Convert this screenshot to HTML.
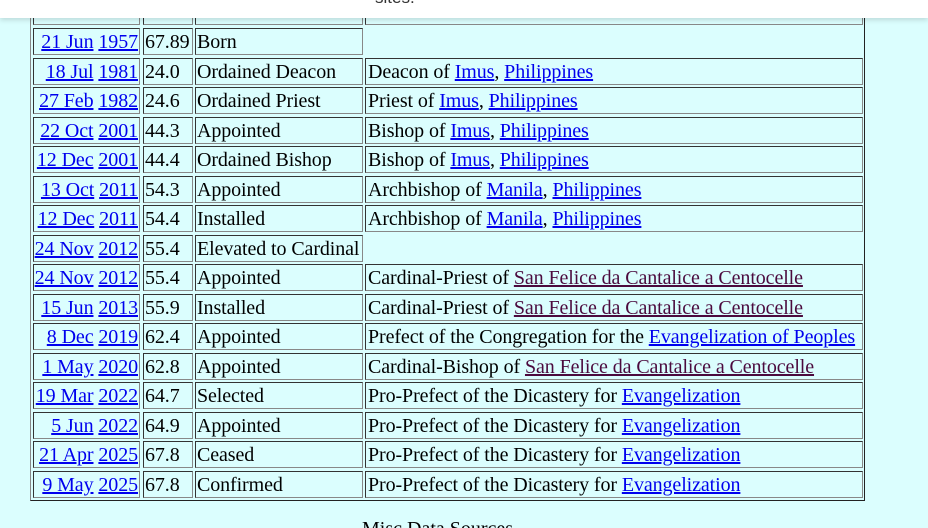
<!DOCTYPE html>
<html><head><meta charset="utf-8"><style>
html,body{margin:0;padding:0;width:928px;height:528px;overflow:hidden;background:#dbfefe;position:relative;font-family:"Liberation Serif",serif;font-size:20px;color:#000}
.top{position:absolute;left:0;top:0;width:928px;height:18px;background:#fff;box-shadow:0 2px 5px rgba(0,0,0,.15);z-index:5}
.top span{position:absolute;left:375px;top:-12px;font-family:"Liberation Sans",sans-serif;font-size:17px;color:#333}
.outer{position:absolute;left:30px;top:-40px;width:835px;height:541px;box-sizing:border-box;border:1px solid;border-color:#888 #222 #222 #888}
.c{position:absolute;height:27px;box-sizing:border-box;border:1px solid;border-color:#333 #888 #888 #333;line-height:26px;white-space:nowrap;overflow:hidden;letter-spacing:-0.1px}
.c1{left:33px;width:107px;text-align:right;padding-right:1px}
.c2{left:143px;width:50px;padding-left:1px}
.c3{left:195px;width:168px;padding-left:1px}
.c4{left:365px;width:498px;padding-left:2px}
a{color:#0000ee;text-decoration:underline}
a.v{color:#4b0a3e}
.misc{position:absolute;left:362px;top:518px;font-size:20px}
</style></head><body>
<div class="top"><span>sites.</span></div>
<div class="outer"></div>
<div class="c c1" style="top:-2px"></div><div class="c c2" style="top:-2px"></div><div class="c c3" style="top:-2px"></div><div class="c c4" style="top:-2px"></div>

<div class="c c1" style="top:28px"><a>21 Jun</a> <a>1957</a></div><div class="c c2" style="top:28px">67.89</div><div class="c c3" style="top:28px">Born</div>

<div class="c c1" style="top:58px"><a>18 Jul</a> <a>1981</a></div><div class="c c2" style="top:58px">24.0</div><div class="c c3" style="top:58px">Ordained Deacon</div><div class="c c4" style="top:58px">Deacon of <a>Imus</a>, <a>Philippines</a></div>

<div class="c c1" style="top:87px"><a>27 Feb</a> <a>1982</a></div><div class="c c2" style="top:87px">24.6</div><div class="c c3" style="top:87px">Ordained Priest</div><div class="c c4" style="top:87px">Priest of <a>Imus</a>, <a>Philippines</a></div>

<div class="c c1" style="top:117px"><a>22 Oct</a> <a>2001</a></div><div class="c c2" style="top:117px">44.3</div><div class="c c3" style="top:117px">Appointed</div><div class="c c4" style="top:117px">Bishop of <a>Imus</a>, <a>Philippines</a></div>

<div class="c c1" style="top:146px"><a>12 Dec</a> <a>2001</a></div><div class="c c2" style="top:146px">44.4</div><div class="c c3" style="top:146px">Ordained Bishop</div><div class="c c4" style="top:146px">Bishop of <a>Imus</a>, <a>Philippines</a></div>

<div class="c c1" style="top:176px"><a>13 Oct</a> <a>2011</a></div><div class="c c2" style="top:176px">54.3</div><div class="c c3" style="top:176px">Appointed</div><div class="c c4" style="top:176px">Archbishop of <a>Manila</a>, <a>Philippines</a></div>

<div class="c c1" style="top:205px"><a>12 Dec</a> <a>2011</a></div><div class="c c2" style="top:205px">54.4</div><div class="c c3" style="top:205px">Installed</div><div class="c c4" style="top:205px">Archbishop of <a>Manila</a>, <a>Philippines</a></div>

<div class="c c1" style="top:235px"><a>24 Nov</a> <a>2012</a></div><div class="c c2" style="top:235px">55.4</div><div class="c c3" style="top:235px">Elevated to Cardinal</div>

<div class="c c1" style="top:264px"><a>24 Nov</a> <a>2012</a></div><div class="c c2" style="top:264px">55.4</div><div class="c c3" style="top:264px">Appointed</div><div class="c c4" style="top:264px">Cardinal-Priest of <a class="v">San Felice da Cantalice a Centocelle</a></div>

<div class="c c1" style="top:294px"><a>15 Jun</a> <a>2013</a></div><div class="c c2" style="top:294px">55.9</div><div class="c c3" style="top:294px">Installed</div><div class="c c4" style="top:294px">Cardinal-Priest of <a class="v">San Felice da Cantalice a Centocelle</a></div>

<div class="c c1" style="top:323px"><a>8 Dec</a> <a>2019</a></div><div class="c c2" style="top:323px">62.4</div><div class="c c3" style="top:323px">Appointed</div><div class="c c4" style="top:323px">Prefect of the Congregation for the <a>Evangelization of Peoples</a></div>

<div class="c c1" style="top:353px"><a>1 May</a> <a>2020</a></div><div class="c c2" style="top:353px">62.8</div><div class="c c3" style="top:353px">Appointed</div><div class="c c4" style="top:353px">Cardinal-Bishop of <a class="v">San Felice da Cantalice a Centocelle</a></div>

<div class="c c1" style="top:382px"><a>19 Mar</a> <a>2022</a></div><div class="c c2" style="top:382px">64.7</div><div class="c c3" style="top:382px">Selected</div><div class="c c4" style="top:382px">Pro-Prefect of the Dicastery for <a>Evangelization</a></div>

<div class="c c1" style="top:412px"><a>5 Jun</a> <a>2022</a></div><div class="c c2" style="top:412px">64.9</div><div class="c c3" style="top:412px">Appointed</div><div class="c c4" style="top:412px">Pro-Prefect of the Dicastery for <a>Evangelization</a></div>

<div class="c c1" style="top:441px"><a>21 Apr</a> <a>2025</a></div><div class="c c2" style="top:441px">67.8</div><div class="c c3" style="top:441px">Ceased</div><div class="c c4" style="top:441px">Pro-Prefect of the Dicastery for <a>Evangelization</a></div>

<div class="c c1" style="top:471px"><a>9 May</a> <a>2025</a></div><div class="c c2" style="top:471px">67.8</div><div class="c c3" style="top:471px">Confirmed</div><div class="c c4" style="top:471px">Pro-Prefect of the Dicastery for <a>Evangelization</a></div>

<div class="misc">Misc Data Sources</div>
</body></html>
